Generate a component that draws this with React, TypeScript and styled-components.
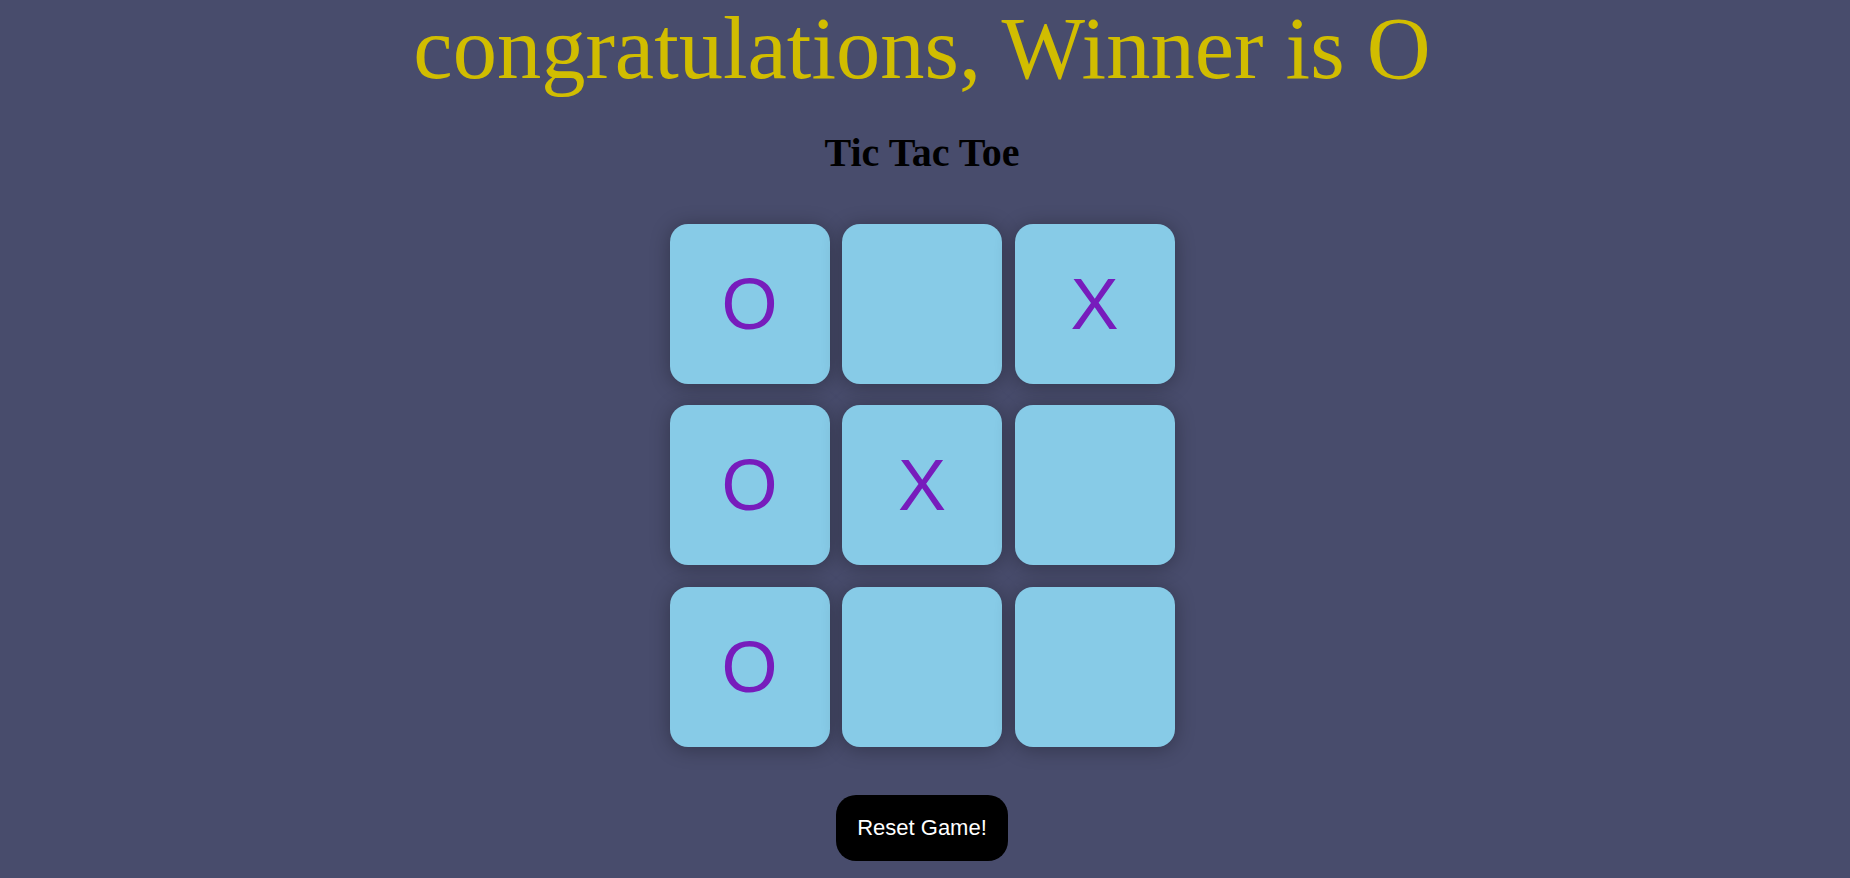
import styled, { createGlobalStyle } from 'styled-components';

const GlobalStyle = createGlobalStyle`
  body {
    margin: 0;
    background: #484c6c;
  }
`;

const Page = styled.div`
  display: flex;
  flex-direction: column;
  align-items: center;
  padding-right: 6px;
  min-height: 100vh;
`;

const Winner = styled.h1`
  margin: 0;
  font-family: "Liberation Serif", "Times New Roman", serif;
  font-size: 88.5px;
  font-weight: 400;
  line-height: 1.1;
  color: #d1bd00;
`;

const Title = styled.h2`
  margin: 32px 0 0;
  font-family: "Liberation Serif", "Times New Roman", serif;
  font-size: 40px;
  font-weight: 700;
  color: #000;
`;

const Board = styled.div`
  margin-top: 47.5px;
  display: grid;
  grid-template-columns: repeat(3, 160px);
  grid-auto-rows: 160px;
  column-gap: 12.5px;
  row-gap: 21.5px;
`;

const Cell = styled.div`
  display: flex;
  align-items: center;
  justify-content: center;
  background: #87cbe7;
  border-radius: 18px;
  box-shadow: 0 2px 20px rgba(0, 0, 0, 0.3);
  font-family: "Liberation Sans", Arial, sans-serif;
  font-size: 72px;
  color: #771cbc;
  cursor: pointer;
`;

const ResetButton = styled.button`
  margin-top: 48px;
  padding: 20px 21px;
  border: none;
  border-radius: 20px;
  background: #000;
  color: #fff;
  font-family: "Liberation Sans", Arial, sans-serif;
  font-size: 22px;
  line-height: 26px;
  cursor: pointer;
`;

const board = ['O', '', 'X', 'O', 'X', '', 'O', '', ''];

export default function App() {
  return (
    <>
      <GlobalStyle />
      <Page>
        <Winner>congratulations, Winner is O</Winner>
        <Title>Tic Tac Toe</Title>
        <Board>
          {board.map((value, i) => (
            <Cell key={i}>{value}</Cell>
          ))}
        </Board>
        <ResetButton>Reset Game!</ResetButton>
      </Page>
    </>
  );
}
